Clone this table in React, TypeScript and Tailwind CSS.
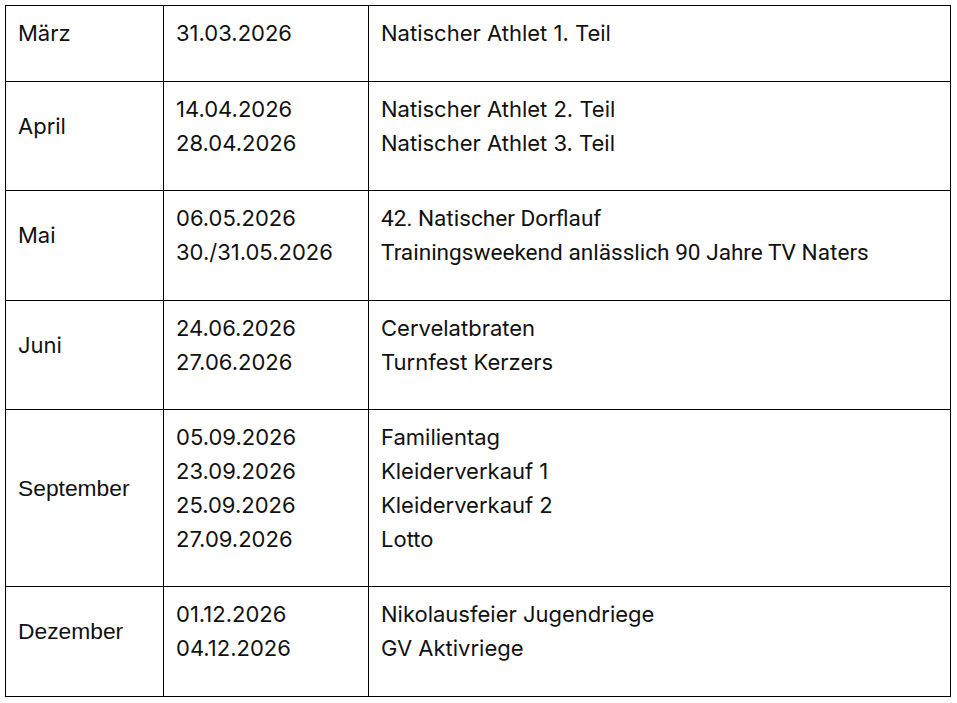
import React from "react";

type Row = { month: string; monthArial?: boolean; dates: string[]; events: string[]; narrow?: boolean };

const rows: Row[] = [
  { month: "März", dates: ["31.03.2026"], events: ["Natischer Athlet 1. Teil"] },
  { month: "April", dates: ["14.04.2026", "28.04.2026"], events: ["Natischer Athlet 2. Teil", "Natischer Athlet 3. Teil"] },
  {
    month: "Mai",
    dates: ["06.05.2026", "30./31.05.2026"],
    events: ["42. Natischer Dorflauf", "Trainingsweekend anlässlich 90 Jahre TV Naters"],
    narrow: true,
  },
  { month: "Juni", dates: ["24.06.2026", "27.06.2026"], events: ["Cervelatbraten", "Turnfest Kerzers"] },
  {
    month: "September",
    monthArial: true,
    dates: ["05.09.2026", "23.09.2026", "25.09.2026", "27.09.2026"],
    events: ["Familientag", "Kleiderverkauf 1", "Kleiderverkauf 2", "Lotto"],
  },
  {
    month: "Dezember",
    monthArial: true,
    dates: ["01.12.2026", "04.12.2026"],
    events: ["Nikolausfeier Jugendriege", "GV Aktivriege"],
  },
];

const App: React.FC = () => {
  return (
    <div className="min-h-screen bg-white pt-[5px] pl-[5px] text-[#111] text-[22px] leading-[33.75px] font-['Inter','Noto_Sans',sans-serif]">
      <div className="w-[946px] border-t border-l border-black">
        {rows.map((r) => (
          <div key={r.month} className="grid grid-cols-[158px_205px_582px]">
            <div className="border-r border-b border-black pl-[12px] pt-[11px] pb-[30px] flex items-center">
              <span className={r.monthArial ? "font-['Liberation_Sans',sans-serif] text-[22.8px]" : ""}>{r.month}</span>
            </div>
            <div className="border-r border-b border-black pl-[12px] pt-[11px] pb-[30px]">
              {r.dates.map((d) => (
                <div key={d}>{d}</div>
              ))}
            </div>
            <div className="border-r border-b border-black pl-[12px] pt-[11px] pb-[30px]">
              {r.events.map((e) => (
                <div key={e} className={r.narrow ? "font-['Roboto',sans-serif] text-[22.6px]" : ""}>
                  {e}
                </div>
              ))}
            </div>
          </div>
        ))}
      </div>
    </div>
  );
};

export default App;
